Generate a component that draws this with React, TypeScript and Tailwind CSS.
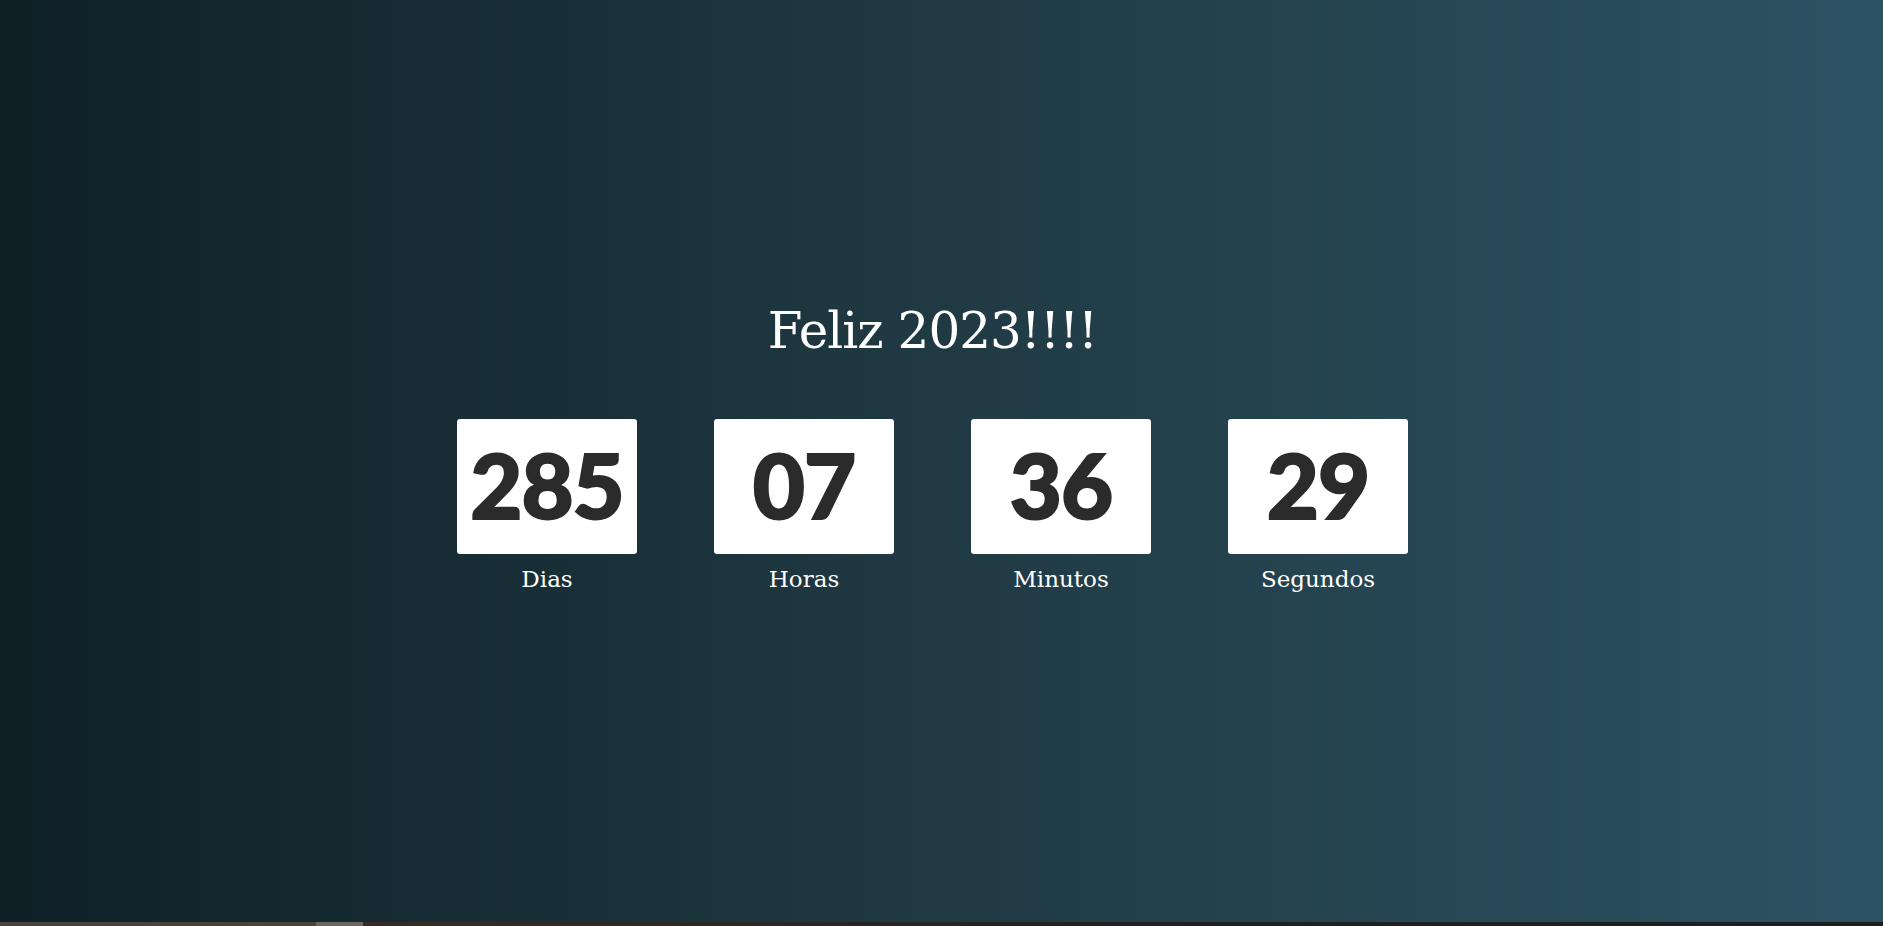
const units = [
  { value: "285", label: "Dias" },
  { value: "07", label: "Horas" },
  { value: "36", label: "Minutos" },
  { value: "29", label: "Segundos" },
];

function CountBox({ value, label }: { value: string; label: string }) {
  return (
    <div className="flex flex-col items-center">
      <div className="w-[180px] h-[135px] bg-white rounded-[3px] flex items-center justify-center">
        <span className="font-['Lato',sans-serif] font-black text-[90px] leading-none tracking-[-1px] text-[#2b2b2b] pb-[6px] [-webkit-text-stroke:2px_#2b2b2b]">
          {value}
        </span>
      </div>
      <p className="mt-[10px] font-['DejaVu_Serif',serif] text-[23px] leading-[30px] text-white">
        {label}
      </p>
    </div>
  );
}

export default function App() {
  return (
    <div className="h-screen w-full flex flex-col overflow-hidden">
      {/* Main gradient area */}
      <div className="flex-1 bg-gradient-to-r from-[#0f2027] via-[#203a43] to-[#2c5364] flex flex-col items-center pr-[18px] pt-[299px]">
        <h1 className="font-['DejaVu_Serif',serif] text-[50px] leading-[64px] text-white tracking-[-1px]">
          Feliz 2023!!!!
        </h1>

        <div className="mt-[56px] flex gap-[77px]">
          {units.map((u) => (
            <CountBox key={u.label} value={u.value} label={u.label} />
          ))}
        </div>
      </div>

      {/* Thin strip at the very bottom */}
      <div className="h-[4px] flex">
        <div className="w-[316px] bg-gradient-to-r from-[#4a433b] to-[#4d4234]" />
        <div className="w-[47px] bg-[#6e675e]" />
        <div className="flex-1 bg-gradient-to-r from-[#3a2c22] via-[#222020] to-[#1e1e1e]" />
      </div>
    </div>
  );
}
